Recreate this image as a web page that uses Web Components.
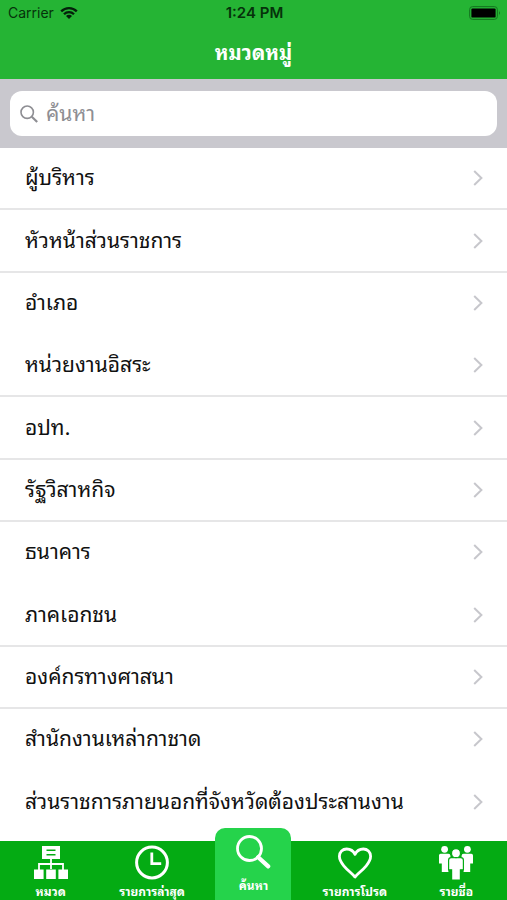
<!DOCTYPE html>
<html lang="th">
<head>
<meta charset="utf-8">
<meta name="viewport" content="width=device-width, initial-scale=1">
<title>หมวดหมู่</title>
<style>
  :root {
    --header-bg: #25b434;
    --search-bg: #c9c8ce;
    --tab-bg: #04ab13;
    --tab-active-bg: #25d34b;
    --divider: #e6e6e7;
    --chevron: #c7c7cc;
  }

  body {
    margin: 0;
    background: #fff;
    color: #111;
    font-family: Inter, "Noto Sans Thai Looped", Loma, Waree, "Noto Sans Thai", "Noto Sans", sans-serif;
  }
</style>
</head>
<body>
<directory-app></directory-app>

<script>
/**
 * Status bar
 */
class StatusBar extends HTMLElement {
  constructor() {
    super();
    this.attachShadow({ mode: 'open' });
    this.shadowRoot.innerHTML = `
      <style>
        :host {
          display: grid;
          grid-template-columns: 1fr auto 1fr;
          align-items: center;
          height: 26px;
          padding: 0 6px 0 8px;
          font-size: 14px;
          line-height: 16px;
          color: #06320b;
        }
        .carrier {
          display: flex;
          align-items: center;
          gap: 6px;
        }
        .time {
          font-size: 15px;
          font-weight: 600;
        }
        .battery { justify-self: end; }
        svg { display: block; }
      </style>
      <div class="carrier">
        <slot name="carrier"></slot>
        <svg width="18" height="14" viewBox="0 0 18 14" fill="none" stroke="#04200a" stroke-width="2.3">
          <path d="M1.2 5.4a11 11 0 0 1 15.6 0"/>
          <path d="M4 8.3a7 7 0 0 1 10 0"/>
          <path d="M9 13 6 9.900a4.200 4.200 0 0 1 6 0z" fill="#04200a" stroke="none"/>
        </svg>
      </div>
      <div class="time"><slot name="time"></slot></div>
      <svg class="battery" width="32" height="14" viewBox="0 0 32 14">
        <rect x="0.6" y="0.6" width="27.8" height="12.8" rx="3" fill="none" stroke="#14761f"/>
        <rect x="2.4" y="2.4" width="24.2" height="9.2" rx="1.2" fill="#000"/>
        <path d="M30 4.8q1.6 2.2 0 4.4z" fill="#0f6019"/>
      </svg>
    `;
  }
}
customElements.define('status-bar', StatusBar);

/**
 * Navigation bar
 */
class NavBar extends HTMLElement {
  constructor() {
    super();
    this.attachShadow({ mode: 'open' });
    this.shadowRoot.innerHTML = `
      <style>
        :host {
          display: flex;
          align-items: center;
          justify-content: center;
          height: 53px;
          color: #fff;
        }
        h1 {
          margin: 0;
          font-size: 20px;
          line-height: 32px;
          font-weight: 700;
        }
      </style>
      <h1><slot></slot></h1>
    `;
  }
}
customElements.define('nav-bar', NavBar);

/**
 * Search field
 */
class SearchField extends HTMLElement {
  constructor() {
    super();
    this.attachShadow({ mode: 'open' });
    this.shadowRoot.innerHTML = `
      <style>
        :host {
          display: block;
          padding: 12px 10px;
          background: var(--search-bg);
        }
        label {
          display: flex;
          align-items: center;
          gap: 8px;
          height: 45px;
          padding: 0 10px;
          border-radius: 12px;
          background: #fff;
        }
        svg { flex: none; }
        input {
          flex: 1;
          min-width: 0;
          height: 40px;
          padding: 0;
          border: 0;
          outline: 0;
          background: none;
          font: inherit;
          font-size: 21px;
          color: #111;
        }
        input::placeholder { color: #8e8e93; opacity: 1; }
      </style>
      <label>
        <svg width="18" height="18" viewBox="0 0 18 18" fill="none" stroke="#8e8e93" stroke-width="1.6">
          <circle cx="7.2" cy="7.2" r="6.2"/>
          <path d="m11.8 11.8 5.4 5.2" stroke-width="2.2"/>
        </svg>
        <input type="text">
      </label>
    `;
  }

  connectedCallback() {
    const input = this.shadowRoot.querySelector('input');
    input.placeholder = this.getAttribute('placeholder') || '';
    input.setAttribute('aria-label', input.placeholder);
  }
}
customElements.define('search-field', SearchField);

/**
 * Category row
 */
class CategoryRow extends HTMLElement {
  constructor() {
    super();
    this.attachShadow({ mode: 'open' });
    this.shadowRoot.innerHTML = `
      <style>
        :host {
          display: flex;
          flex: 1;
          min-height: 56px;
          box-sizing: border-box;
          border-bottom: 2px solid transparent;
        }
        :host([divided]) { border-bottom-color: var(--divider); }
        a {
          flex: 1;
          display: flex;
          align-items: center;
          justify-content: space-between;
          gap: 16px;
          padding: 0 24px 0 25px;
          color: inherit;
          text-decoration: none;
          font-size: 21px;
          line-height: 32px;
        }
        svg { flex: none; }
      </style>
      <a href="#">
        <span><slot></slot></span>
        <svg width="10" height="16" viewBox="0 0 10 16" fill="none" stroke="var(--chevron)" stroke-width="2">
          <path d="m1.2 1 7.2 7-7.2 7"/>
        </svg>
      </a>
    `;
  }
}
customElements.define('category-row', CategoryRow);

/**
 * Tab bar
 */
class TabBar extends HTMLElement {
  constructor() {
    super();
    this.attachShadow({ mode: 'open' });
    this.shadowRoot.innerHTML = `
      <style>
        :host {
          display: grid;
          grid-template: 100% / repeat(5, 1fr);
          align-items: end;
          justify-items: center;
          height: 59px;
          background: var(--tab-bg);
          color: #fff;
        }
      </style>
      <slot></slot>
    `;
  }
}
customElements.define('tab-bar', TabBar);

const TAB_ICONS = {
  category: `
    <path d="M9 1h18v13H9z" fill="currentColor"/>
    <path d="M13.5 5.3h9M13.5 9.7h9" stroke="var(--tab-bg)" stroke-width="1.6"/>
    <path d="M18 14v10M6 25v-6h24v6" fill="none" stroke="currentColor" stroke-width="1.8"/>
    <path d="M1 24.5h9.6V34H1zM13.2 24.5h9.6V34h-9.6zM25.4 24.5H35V34h-9.6z" fill="currentColor"/>`,
  recent: `
    <circle cx="18" cy="17.5" r="15.4" fill="none" stroke="currentColor" stroke-width="3"/>
    <path d="M17.8 7.5v11.2h9.4" fill="none" stroke="currentColor" stroke-width="2.8"/>`,
  search: `
    <circle cx="14.5" cy="14.5" r="12" fill="none" stroke="currentColor" stroke-width="2.8"/>
    <path d="m23.2 23.2 10 9.2" fill="none" stroke="currentColor" stroke-width="4.2" stroke-linecap="round"/>`,
  favorite: `
    <path d="M18 32C15.5 29 10.5 25.3 6.8 20.8C3.2 16.5 2.4 13.8 2.4 11.3C2.4 7 5.6 4 9.7 4C13.3 4 16.4 6 18 9.3C19.6 6 22.7 4 26.3 4C30.4 4 33.6 7 33.6 11.3C33.6 13.8 32.8 16.5 29.2 20.8C25.5 25.3 20.5 29 18 32Z" fill="none" stroke="currentColor" stroke-width="2.8" stroke-linejoin="round"/>`,
  people: `
    <g fill="currentColor">
      <circle cx="6.6" cy="4.3" r="3.4"/>
      <circle cx="29.4" cy="4.3" r="3.4"/>
      <path d="M2.6 8.7h7.8q2 0 2 2v7.8h-2V27H3.8v-8.5H1v-8q0-1.800 1.600-1.800zM25.600 8.700h7.800q1.600 0 1.600 1.800v8h-2.800V27h-6.600v-8.500h-2v-7.800q0-2 2-2z"/>
    </g>
    <g fill="currentColor" stroke="var(--tab-bg)" stroke-width="1.2">
      <path d="M13.2 12.6h9.6q2.6 0 2.6 2.6v9.6h-3V35h-8.8V24.8h-3v-9.6q0-2.6 2.6-2.6z"/>
      <circle cx="18" cy="8.2" r="4.5"/>
    </g>`
};

class TabItem extends HTMLElement {
  constructor() {
    super();
    this.attachShadow({ mode: 'open' });
  }

  connectedCallback() {
    const icon = TAB_ICONS[this.getAttribute('icon')] || '';
    const current = this.hasAttribute('active') ? 'aria-current="page"' : '';

    this.shadowRoot.innerHTML = `
      <style>
        :host { display: block; }
        button {
          display: flex;
          flex-direction: column;
          align-items: center;
          gap: 3px;
          min-width: 76px;
          height: 55px;
          padding: 0;
          border: 0;
          background: none;
          color: inherit;
          font: inherit;
          font-size: 12px;
          line-height: 16px;
          font-weight: 700;
          white-space: nowrap;
          cursor: pointer;
        }
        svg { flex: none; }
        /* the selected tab rises above the bar */
        :host([active]) button {
          gap: 8px;
          height: 72px;
          padding-top: 6px;
          box-sizing: border-box;
          border-radius: 10px 10px 0 0;
          background: var(--tab-active-bg);
        }
      </style>
      <button type="button" ${current}>
        <svg width="36" height="36" viewBox="0 0 36 36">${icon}</svg>
        <span><slot></slot></span>
      </button>
    `;
  }
}
customElements.define('tab-item', TabItem);

/**
 * App shell
 */
class DirectoryApp extends HTMLElement {
  constructor() {
    super();
    this.attachShadow({ mode: 'open' });
    this.shadowRoot.innerHTML = `
      <style>
        :host {
          display: flex;
          flex-direction: column;
          min-height: 100vh;
        }
        header { background: var(--header-bg); }
        main {
          flex: 1;
          display: flex;
          flex-direction: column;
          padding-bottom: 7px;
        }
      </style>
      <header>
        <status-bar>
          <span slot="carrier">Carrier</span>
          <span slot="time">1:24 PM</span>
        </status-bar>
        <nav-bar>หมวดหมู่</nav-bar>
      </header>
      <search-field placeholder="ค้นหา"></search-field>
      <main>
        <category-row divided>ผู้บริหาร</category-row>
        <category-row divided>หัวหน้าส่วนราชการ</category-row>
        <category-row>อำเภอ</category-row>
        <category-row divided>หน่วยงานอิสระ</category-row>
        <category-row divided>อปท.</category-row>
        <category-row divided>รัฐวิสาหกิจ</category-row>
        <category-row>ธนาคาร</category-row>
        <category-row divided>ภาคเอกชน</category-row>
        <category-row divided>องค์กรทางศาสนา</category-row>
        <category-row>สำนักงานเหล่ากาชาด</category-row>
        <category-row>ส่วนราชการภายนอกที่จังหวัดต้องประสานงาน</category-row>
      </main>
      <tab-bar>
        <tab-item icon="category">หมวด</tab-item>
        <tab-item icon="recent">รายการล่าสุด</tab-item>
        <tab-item icon="search" active>ค้นหา</tab-item>
        <tab-item icon="favorite">รายการโปรด</tab-item>
        <tab-item icon="people">รายชื่อ</tab-item>
      </tab-bar>
    `;
  }
}
customElements.define('directory-app', DirectoryApp);
</script>
</body>
</html>
